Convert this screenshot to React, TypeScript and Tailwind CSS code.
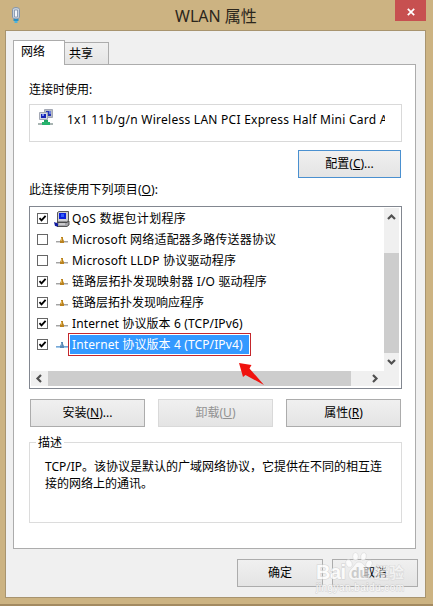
import type { ReactNode } from 'react';

type Item = {
    label: string;
    checked: boolean;
    icon: 'computer' | 'protocol';
    spacing: string;
    selected?: boolean;
};

const items: Item[] = [
    { label: 'QoS 数据包计划程序', checked: true, icon: 'computer', spacing: 'tracking-[0.35px]' },
    { label: 'Microsoft 网络适配器多路传送器协议', checked: false, icon: 'protocol', spacing: 'tracking-[0.18px]' },
    { label: 'Microsoft LLDP 协议驱动程序', checked: false, icon: 'protocol', spacing: 'tracking-[0.2px]' },
    { label: '链路层拓扑发现映射器 I/O 驱动程序', checked: true, icon: 'protocol', spacing: 'tracking-[0.15px]' },
    { label: '链路层拓扑发现响应程序', checked: true, icon: 'protocol', spacing: '' },
    { label: 'Internet 协议版本 6 (TCP/IPv6)', checked: true, icon: 'protocol', spacing: 'tracking-[0.12px]' },
    { label: 'Internet 协议版本 4 (TCP/IPv4)', checked: true, icon: 'protocol', spacing: 'tracking-[0.12px]', selected: true },
];

const PlugIcon = () => (
    <svg width="10" height="17" viewBox="0 0 10 17">
        <path d="M1.500 2.500Q1.500 .5 5 .5T8.500 2.500V10Q8.500 12 5 12T1.500 10Z" fill="#c9d3de" stroke="#8495ab" />
        <path d="M3.500 3h3v7h-3z" fill="#f6f8fb" stroke="#7c8ca4" strokeWidth=".8" />
        <path d="M2.500 12h5v2h-5z" fill="#2b91c5" />
        <path d="M3.500 14h3v2h-3z" fill="#4fb4dc" />
    </svg>
);

const AdapterIcon = () => (
    <svg width="16" height="17" viewBox="0 0 16 17">
        <path d="M6.500 .5h8v8h-8z" fill="#b8bcc6" stroke="#a3a8b4" />
        <path d="M8 2h5v5H8z" fill="#2637b5" />
        <path d="M11 2h2v3h-2z" fill="#6d80dc" />
        <path d="M1.500 3.500h8v7h-8z" fill="#d5d9e2" stroke="#a3a8b4" />
        <path d="M3 5h5v4H3z" fill="#1522b4" />
        <path d="M4 5h2v2H4z" fill="#7d91ef" />
        <path d="M6 11h4v3H6z" fill="#20a565" />
        <path d="M0 14h15v2H0z" fill="#a8b4b2" />
        <path d="M4 13h8v3H4z" fill="#26b36d" />
    </svg>
);

const ComputerIcon = () => (
    <svg width="16" height="16" viewBox="0 0 16 16">
        <path d="M3.500 1.500 5 .5h9.500v9l-2 1.500h-9z" fill="#cfcfd2" stroke="#333" strokeWidth=".8" />
        <path d="M5 2h7v6H5z" fill="#0a20db" />
        <path d="M7 3h3v3H7z" fill="#315dfa" />
        <path d="M3 11.500h10l2-1.500v4l-2 1.500H3z" fill="#a5a5aa" stroke="#333" strokeWidth=".8" />
        <path d="M0 11l4 1.500v3L1 15z" fill="#101a9e" />
        <path d="M5 13h6" stroke="#efefef" />
    </svg>
);

const ProtocolIcon = ({ selected }: { selected?: boolean }) => (
    <svg width="12" height="8" viewBox="0 0 12 8">
        <path d="M0 5.500h12" stroke={selected ? '#76a8d6' : '#a3a3a3'} />
        <path d="M0 6.500h12" stroke={selected ? '#a3c8ea' : '#d5d5d5'} />
        <path d="M5 1h2v2l1 2v2H4V5l1-2z" fill={selected ? '#5a8ab8' : '#b98220'} />
        <path d="M5 2h1v3H5z" fill={selected ? '#80a4c4' : '#e4b34c'} />
    </svg>
);

const CheckBox = ({ checked }: { checked: boolean }) => (
    <span className="flex h-[11px] w-[11px] shrink-0 items-center justify-center border border-[#666] bg-white">
        {checked && (
            <svg width="9" height="9" viewBox="0 0 9 9">
                <path d="M1.500 4.200 3.500 6.400 7.600 1.800" fill="none" stroke="#000" strokeWidth="1.800" />
            </svg>
        )}
    </span>
);

const Chevron = ({ dir }: { dir: 'up' | 'down' | 'left' | 'right' }) => {
    const paths = {
        up: 'M1 6 4.500 2.500 8 6',
        down: 'M1 3 4.500 6.500 8 3',
        left: 'M6 1 2.500 4.500 6 8',
        right: 'M3 1 6.500 4.500 3 8',
    };
    return (
        <svg width="9" height="9" viewBox="0 0 9 9">
            <path d={paths[dir]} fill="none" stroke="#505050" strokeWidth="2.200" />
        </svg>
    );
};

const Button = ({ children, className }: { children: ReactNode; className: string }) => (
    <button className={`flex h-7 items-center justify-center border bg-gradient-to-b from-[#f0f0f0] to-[#e4e4e4] ${className}`}>
        {children}
    </button>
);

const Watermark = () => (
    <div className="pointer-events-none absolute left-[315px] top-[551px] h-[44px] w-[92px] opacity-80">
        <svg width="92" height="44" viewBox="0 0 92 44" fontFamily="'Liberation Sans', 'Noto Sans CJK SC', sans-serif" fontWeight="bold">
            <g fill="#fff" stroke="#d4d4d4" strokeWidth=".6">
                <ellipse cx="34" cy="12.500" rx="3" ry="4" transform="rotate(-20 34 12.500)" />
                <ellipse cx="40.500" cy="5.500" rx="2.800" ry="4" />
                <ellipse cx="48.500" cy="5.500" rx="2.800" ry="4" transform="rotate(12 48.500 5.500)" />
                <ellipse cx="54" cy="13" rx="3" ry="4" transform="rotate(20 54 13)" />
                <path d="M44 11c-4 0-4 4-8 7-4 4-3 11 3 11h11c6 0 7-7 3-11-4-3-5-7-9-7z" fillOpacity=".8" />
            </g>
            <g fill="#fff" stroke="#cbcbcb" strokeWidth="1" paintOrder="stroke">
                <text x="1" y="28" fontSize="20" textLength="30">Bai</text>
                <text x="36" y="27" fontSize="14" fill="#c4c4c4" stroke="none">du</text>
                <text x="59" y="27" fontSize="15" textLength="30" fillOpacity=".7" strokeOpacity=".7">经验</text>
                <text x="1" y="40" fontSize="10" fontWeight="normal" textLength="88">jingyan.baidu.com</text>
            </g>
        </svg>
    </div>
);

export default function App() {
    return (
        <div className="relative flex h-[606px] w-[433px] flex-col overflow-hidden border-b-2 border-[#a38a60] bg-[#ccb382] font-['Noto_Sans','Noto_Sans_CJK_SC',sans-serif] text-[12px] leading-4 text-black">
            {/* Title bar */}
            <header className="flex h-[30px] shrink-0 justify-between">
                <div className="pl-[11px] pt-[7px]"><PlugIcon /></div>
                <h1 className="ml-[154px] mt-[4px] grow text-[16px] leading-6 text-[#2b261c]">WLAN 属性</h1>
                <button className="mr-[7px] flex h-[21px] w-[31px] items-center justify-center bg-[#c75050]">
                    <svg width="8" height="8" viewBox="0 0 8 8" className="mt-[2px]">
                        <path d="M.8.8 7.200 7.200M7.200.8.8 7.200" stroke="#fff" strokeWidth="1.700" />
                    </svg>
                </button>
            </header>

            <main className="ml-[5px] flex h-[568px] w-[421px] shrink-0 flex-col border border-[#a8946f] bg-[#f0f0f0] pl-[7px] pt-[9px]">
                {/* Tabs */}
                <nav className="z-10 -mb-px flex h-[25px] items-end">
                    <div className="h-[25px] w-[52px] border border-b-0 border-[#acacac] bg-white pl-[7px] pt-[3px]">网络</div>
                    <div className="h-[23px] w-[45px] -ml-px border border-[#acacac] bg-gradient-to-b from-[#f0f0f0] to-[#e5e5e5] pl-[4px] pt-[3px]">共享</div>
                </nav>

                <section className="flex h-[485px] w-[403px] shrink-0 flex-col border border-[#acacac] bg-white pl-[15px]">
                    <p className="mt-[17px]">连接时使用:</p>
                    <div className="mt-[6px] flex h-[38px] w-[373px] shrink-0 border border-[#d9d9d9] pl-[8px] pt-[4px]">
                        <AdapterIcon />
                        <div className="ml-[13px] mt-[3px] w-[318px] overflow-hidden whitespace-nowrap tracking-[0.26px]">
                            1x1 11b/g/n Wireless LAN PCI Express Half Mini Card A
                        </div>
                    </div>
                    <Button className="ml-[269px] mt-[8px] w-[103px] shrink-0 border-[#4a90d0]">配置(<u>C</u>)...</Button>
                    <p className="mt-[4px] tracking-[0.1px]">此连接使用下列项目(<u>O</u>):</p>

                    {/* Item list with both scrollbars */}
                    <div className="relative mt-[8px] flex h-[183px] w-[373px] shrink-0 flex-col border border-[#828790] p-px">
                        <div className="flex h-[163px] shrink-0">
                            <ul className="w-[353px]">
                                {items.map((item) => (
                                    <li key={item.label} className="flex h-[21px] items-center pl-[6px]">
                                        <CheckBox checked={item.checked} />
                                        <span className="ml-[6px] flex w-[16px] shrink-0 justify-center">
                                            {item.icon === 'computer' ? <ComputerIcon /> : <ProtocolIcon selected={item.selected} />}
                                        </span>
                                        {item.selected ? (
                                            <span className="-ml-[2px] flex h-[23px] w-[183px] shrink-0 border border-[#c4272c] bg-white p-px">
                                                <span className={`w-full whitespace-nowrap bg-[#3399ff] pl-[2px] leading-[19px] text-white ${item.spacing}`}>{item.label}</span>
                                            </span>
                                        ) : (
                                            <span className={`ml-[2px] whitespace-nowrap ${item.spacing}`}>{item.label}</span>
                                        )}
                                    </li>
                                ))}
                            </ul>
                            <div className="flex w-[15px] flex-col items-center bg-[#f0f0f0]">
                                <div className="flex h-[18px] items-center"><Chevron dir="up" /></div>
                                <div className="mt-[27px] h-[100px] w-full bg-[#cdcdcd]" />
                                <div className="flex h-[17px] items-center"><Chevron dir="down" /></div>
                            </div>
                        </div>
                        <div className="flex h-[15px] w-[368px] items-center bg-[#f0f0f0]">
                            <div className="flex w-[17px] justify-center"><Chevron dir="left" /></div>
                            <div className="h-full w-[303px] bg-[#cdcdcd]" />
                            <div className="ml-[19px]"><Chevron dir="right" /></div>
                        </div>
                        <svg className="absolute left-[208px] top-[155px]" width="28" height="25" viewBox="0 0 28 25">
                            <path d="M1 1 13.500 3 11.500 6.500 26 23 7.500 13 5 15z" fill="#f0120e" />
                        </svg>
                    </div>

                    <div className="ml-px mt-[10px] flex gap-[13px]">
                        <Button className="w-[115px] border-[#acacac]">安装(<u>N</u>)...</Button>
                        <Button className="w-[115px] border-[#d9d9d9] text-[#929292]">卸载(<u>U</u>)</Button>
                        <Button className="w-[115px] border-[#acacac]">属性(<u>R</u>)</Button>
                    </div>

                    <div className="mt-[15px] h-[81px] w-[373px] shrink-0 border border-[#dcdcdc] pl-[6px]">
                        <h2 className="-mt-[8px] w-[28px] bg-white pl-[2px]">描述</h2>
                        <p className="ml-[9px] mt-[7px] whitespace-nowrap leading-[17px]">
                            TCP/IP。该协议是默认的广域网络协议，它提供在不同的相互连
                            <br />
                            接的网络上的通讯。
                        </p>
                    </div>
                </section>

                <footer className="mt-[10px] flex gap-[9px] pl-[224px]">
                    <Button className="w-[86px] border-[#acacac]">确定</Button>
                    <Button className="w-[86px] border-[#acacac]">取消</Button>
                </footer>
            </main>
            <Watermark />
        </div>
    );
}
